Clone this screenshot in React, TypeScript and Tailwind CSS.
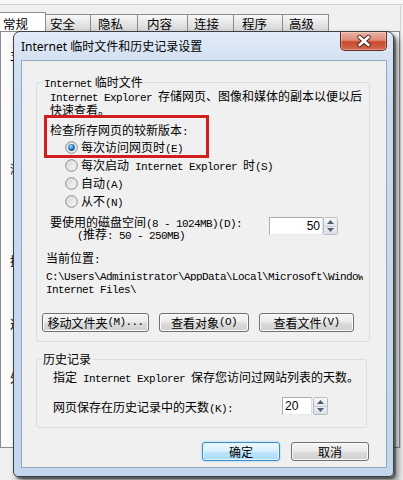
import React from "react";

const CJK = "font-['Noto_Sans_CJK_SC','Noto_Sans_CJK_JP',sans-serif]";

function M({ children }: { children: React.ReactNode }) {
  return (
    <span className="font-['Liberation_Mono','DejaVu_Sans_Mono',monospace] text-[11px] leading-none tracking-[-0.6px]">
      {children}
    </span>
  );
}

function Radio({ checked }: { checked?: boolean }) {
  return (
    <svg width="13" height="13" viewBox="0 0 13 13" className="shrink-0">
      <defs>
        <linearGradient id={checked ? "rgc" : "rgu"} x1="0" y1="0" x2="1" y2="1">
          <stop offset="0" stopColor="#d4d4d4" />
          <stop offset="1" stopColor="#fbfbfb" />
        </linearGradient>
        <radialGradient id="rdot" cx="0.4" cy="0.35" r="0.7">
          <stop offset="0" stopColor="#b9e3fb" />
          <stop offset="0.45" stopColor="#3f8fd2" />
          <stop offset="1" stopColor="#0f4a86" />
        </radialGradient>
      </defs>
      <circle cx="6.5" cy="6.5" r="5.8" fill={`url(#${checked ? "rgc" : "rgu"})`} stroke="#8a8a8a" strokeWidth="1" />
      <circle cx="6.5" cy="6.5" r="4.2" fill="none" stroke="#e9e9e9" strokeWidth="0.8" />
      {checked && <circle cx="6.5" cy="6.5" r="3.4" fill="url(#rdot)" />}
    </svg>
  );
}

function Arrows() {
  return (
    <div className="w-[15px] h-[18px] flex flex-col border border-[#b9bcc3] rounded-[2px] bg-white">
      <div className="flex-1 flex items-center justify-center border-b border-[#c9ccd2] bg-[linear-gradient(to_bottom,#f7f7f7,#e4e6ea)]">
        <svg width="7" height="4" viewBox="0 0 7 4">
          <path d="M0 4 L3.5 0 L7 4 Z" fill="#4c5e78" />
        </svg>
      </div>
      <div className="flex-1 flex items-center justify-center bg-[linear-gradient(to_bottom,#eceef1,#dcdfe4)]">
        <svg width="7" height="4" viewBox="0 0 7 4">
          <path d="M0 0 L7 0 L3.5 4 Z" fill="#4c5e78" />
        </svg>
      </div>
    </div>
  );
}

function Btn({ children, cls, def }: { children: React.ReactNode; cls: string; def?: boolean }) {
  return (
    <div
      className={`${cls} h-[19px] flex items-center justify-center rounded-[3px] border text-[12px] leading-[13px] whitespace-nowrap ${
        def
          ? "border-[#3c8ccb] bg-[linear-gradient(to_bottom,#eaf6fd_0%,#d9f0fc_48%,#bee6fd_52%,#a9dbf6_100%)] shadow-[inset_0_0_0_1px_#e3f4fc,0_0_2px_#7cc4f0]"
          : "border-[#707070] bg-[linear-gradient(to_bottom,#f4f4f4_0%,#ebebeb_48%,#dddddd_52%,#cfcfcf_100%)] shadow-[inset_0_0_0_1px_#fbfbfb]"
      }`}
    >
      {children}
    </div>
  );
}

const tabs = [
  { t: "安全", cls: "w-[45px] pl-[4px]" },
  { t: "隐私", cls: "w-[47px] pl-[7px]" },
  { t: "内容", cls: "w-[50px] pl-[9px]" },
  { t: "连接", cls: "w-[46px] pl-[6px]" },
  { t: "程序", cls: "w-[49px] pl-[8px]" },
  { t: "高级", cls: "w-[46px] pl-[6px]" },
];

export default function App() {
  return (
    <div className={`relative w-[403px] h-[480px] overflow-hidden bg-[#f0f0f0] text-black ${CJK}`}>
      <div className="h-[5px] bg-[#f8f8f8] border-b border-[#d4d4d4]" />
      <div className="w-[401px] border-r border-[#d4d4d4]">
        {/* tabs */}
        <div className="h-[26px] flex items-end">
          <div className="ml-[-4px] w-[50px] h-[19px] pl-[6px] pt-[4px] bg-white border border-b-0 border-[#898c95] text-[12.5px] leading-[14px]">
            常规
          </div>
          {tabs.map((tab) => (
            <div
              key={tab.t}
              className={`${tab.cls} h-[17px] pt-[2px] border-t border-r border-[#898c95] bg-[linear-gradient(to_bottom,#f8f8f8,#e3e3e3_60%,#d6d6d6)] text-[12.5px] leading-[14px]`}
            >
              {tab.t}
            </div>
          ))}
        </div>
        {/* tab page behind the dialog */}
        <div className="h-[417px] bg-[#fbfbfb] border border-[#898c95] pt-[16px] pl-[9px] text-[12px] leading-[13px]">
          <div className="h-[13px]">主页</div>
          <div className="h-[13px] mt-[101px]">浏览历史记录</div>
          <div className="h-[13px] mt-[79px]">搜索</div>
          <div className="h-[13px] mt-[50px]">选项卡</div>
          <div className="h-[13px] mt-[41px]">外观</div>
        </div>
      </div>

      {/* dialog window */}
      <div className="absolute left-[13px] top-[31px] w-[381px] h-[446px] rounded-t-[7px] rounded-b-[5px] border border-[#3a3f48] bg-[linear-gradient(to_bottom,#e2ebf7_0px,#d3e1f2_28px,#c9dbef_80px,#c2d6ec_100%)] shadow-[2px_2px_1px_rgba(0,0,0,0.35),4px_5px_7px_rgba(0,0,0,0.5)] pl-[7px] pr-[6px] pb-[8px] flex flex-col">
        {/* title bar */}
        <div className="h-[28px] shrink-0 flex items-start justify-between">
          <div className="pt-[8px] h-[21px] text-[12px] leading-[13px] font-['Noto_Sans','Noto_Sans_CJK_SC',sans-serif]">
            Internet 临时文件和历史记录设置
          </div>
          <div className="w-[47px] h-[19px] rounded-b-[5px] border border-t-0 border-[#6e2a1f] bg-[linear-gradient(to_bottom,#eab2a4_0%,#dd8c78_45%,#c9482d_55%,#d36b51_100%)] shadow-[inset_0_0_0_1px_rgba(255,255,255,0.3)] flex items-center justify-center">
            <svg width="16" height="12" viewBox="0 0 16 12" className="overflow-visible">
              <path d="M3.5 2 L12.5 10 M12.5 2 L3.5 10" stroke="#47201a" strokeWidth="4.4" strokeLinecap="round" />
              <path d="M3.5 2 L12.5 10 M12.5 2 L3.5 10" stroke="#ffffff" strokeWidth="2.6" strokeLinecap="round" />
            </svg>
          </div>
        </div>

        {/* client area */}
        <div className="h-[408px] shrink-0 border border-[#93a7c0] bg-[#f0f0f0] text-[12px]">
          {/* Internet temp files */}
          <fieldset className="mt-[14px] ml-[14px] w-[334px] border border-[#d5dfe5] rounded-[3px] pb-[9px]">
            <legend className="ml-[6px] px-[1px] h-[14px] leading-[14px]">
              <M>Internet</M> 临时文件
            </legend>
            <div className="ml-[13px] h-[14px] leading-[14px] whitespace-nowrap">
              <M>Internet Explorer </M>存储网页、图像和媒体的副本以便以后
            </div>
            <div className="ml-[13px] h-[14px] leading-[14px]">快速查看。</div>
            <div className="ml-[13px] mt-[6px] h-[14px] leading-[14px]">
              检查所存网页的较新版本<M>:</M>
            </div>
            <div className="mt-[1px] ml-[28px] flex flex-col">
              <div className="h-[18px] flex items-center gap-[3px] leading-[14px]">
                <Radio checked />
                <span>
                  每次访问网页时<M>(E)</M>
                </span>
              </div>
              <div className="h-[18px] flex items-center gap-[3px] leading-[14px]">
                <Radio />
                <span>
                  每次启动<M> Internet Explorer </M>时<M>(S)</M>
                </span>
              </div>
              <div className="h-[18px] flex items-center gap-[3px] leading-[14px]">
                <Radio />
                <span>
                  自动<M>(A)</M>
                </span>
              </div>
              <div className="h-[18px] flex items-center gap-[3px] leading-[14px]">
                <Radio />
                <span>
                  从不<M>(N)</M>
                </span>
              </div>
            </div>
            <div className="mt-[6px] ml-[13px] h-[24px] flex items-start">
              <div className="w-[219px] leading-[12px] whitespace-nowrap">
                <div className="h-[12px]">
                  要使用的磁盘空间<M>(8 - 1024MB)(D):</M>
                </div>
                <div className="h-[12px] pl-[27px]">
                  <M>(</M>推荐<M>: 50 - 250MB)</M>
                </div>
              </div>
              <div className="mt-[1px] flex">
                <div className="w-[54px] h-[18px] bg-white border border-[#abadb3] border-b-[#e3e9ef] border-r-[#dbdfe6] flex items-center justify-end pr-[2px] font-['Liberation_Sans',sans-serif] text-[12px] leading-none">
                  50
                </div>
                <Arrows />
              </div>
            </div>
            <div className="mt-[11px] ml-[9px] h-[14px] leading-[14px]">
              当前位置<M>:</M>
            </div>
            <div className="mt-[3px] ml-[9px] w-[317px] h-[13px] overflow-hidden whitespace-nowrap leading-[13px]">
              <M>C:\Users\Administrator\AppData\Local\Microsoft\Windows\Temporary</M>
            </div>
            <div className="ml-[9px] h-[13px] leading-[13px]">
              <M>Internet Files\</M>
            </div>
            <div className="mt-[19px] ml-[5px] flex gap-[10px]">
              <Btn cls="w-[107px]">
                移动文件夹<M>(M)...</M>
              </Btn>
              <Btn cls="w-[90px]">
                查看对象<M>(O)</M>
              </Btn>
              <Btn cls="w-[95px]">
                查看文件<M>(V)</M>
              </Btn>
            </div>
          </fieldset>

          {/* History */}
          <fieldset className="mt-[10px] ml-[14px] w-[331px] border border-[#d5dfe5] rounded-[3px] pb-[12px]">
            <legend className="ml-[5px] px-[1px] h-[14px] leading-[14px]">历史记录</legend>
            <div className="mt-[4px] ml-[16px] h-[14px] leading-[14px] whitespace-nowrap">
              指定<M> Internet Explorer </M>保存您访问过网站列表的天数。
            </div>
            <div className="mt-[13px] ml-[16px] h-[18px] flex items-start">
              <div className="w-[229px] mt-[3px] h-[14px] leading-[14px] whitespace-nowrap">
                网页保存在历史记录中的天数<M>(K):</M>
              </div>
              <div className="flex gap-[1px]">
                <div className="w-[30px] h-[18px] bg-white border border-[#abadb3] border-b-[#e3e9ef] border-r-[#dbdfe6] flex items-center pl-[2px] font-['Liberation_Sans',sans-serif] text-[12px] leading-none">
                  20
                </div>
                <Arrows />
              </div>
            </div>
          </fieldset>

          {/* OK / Cancel */}
          <div className="mt-[14px] flex justify-end gap-[11px] pr-[17px]">
            <Btn cls="w-[78px]" def>
              确定
            </Btn>
            <Btn cls="w-[78px]">取消</Btn>
          </div>
        </div>
      </div>

      {/* red annotation box */}
      <div className="absolute left-[44px] top-[115px] w-[165px] h-[43px] border-[3px] border-[#d01f1f]" />
    </div>
  );
}
